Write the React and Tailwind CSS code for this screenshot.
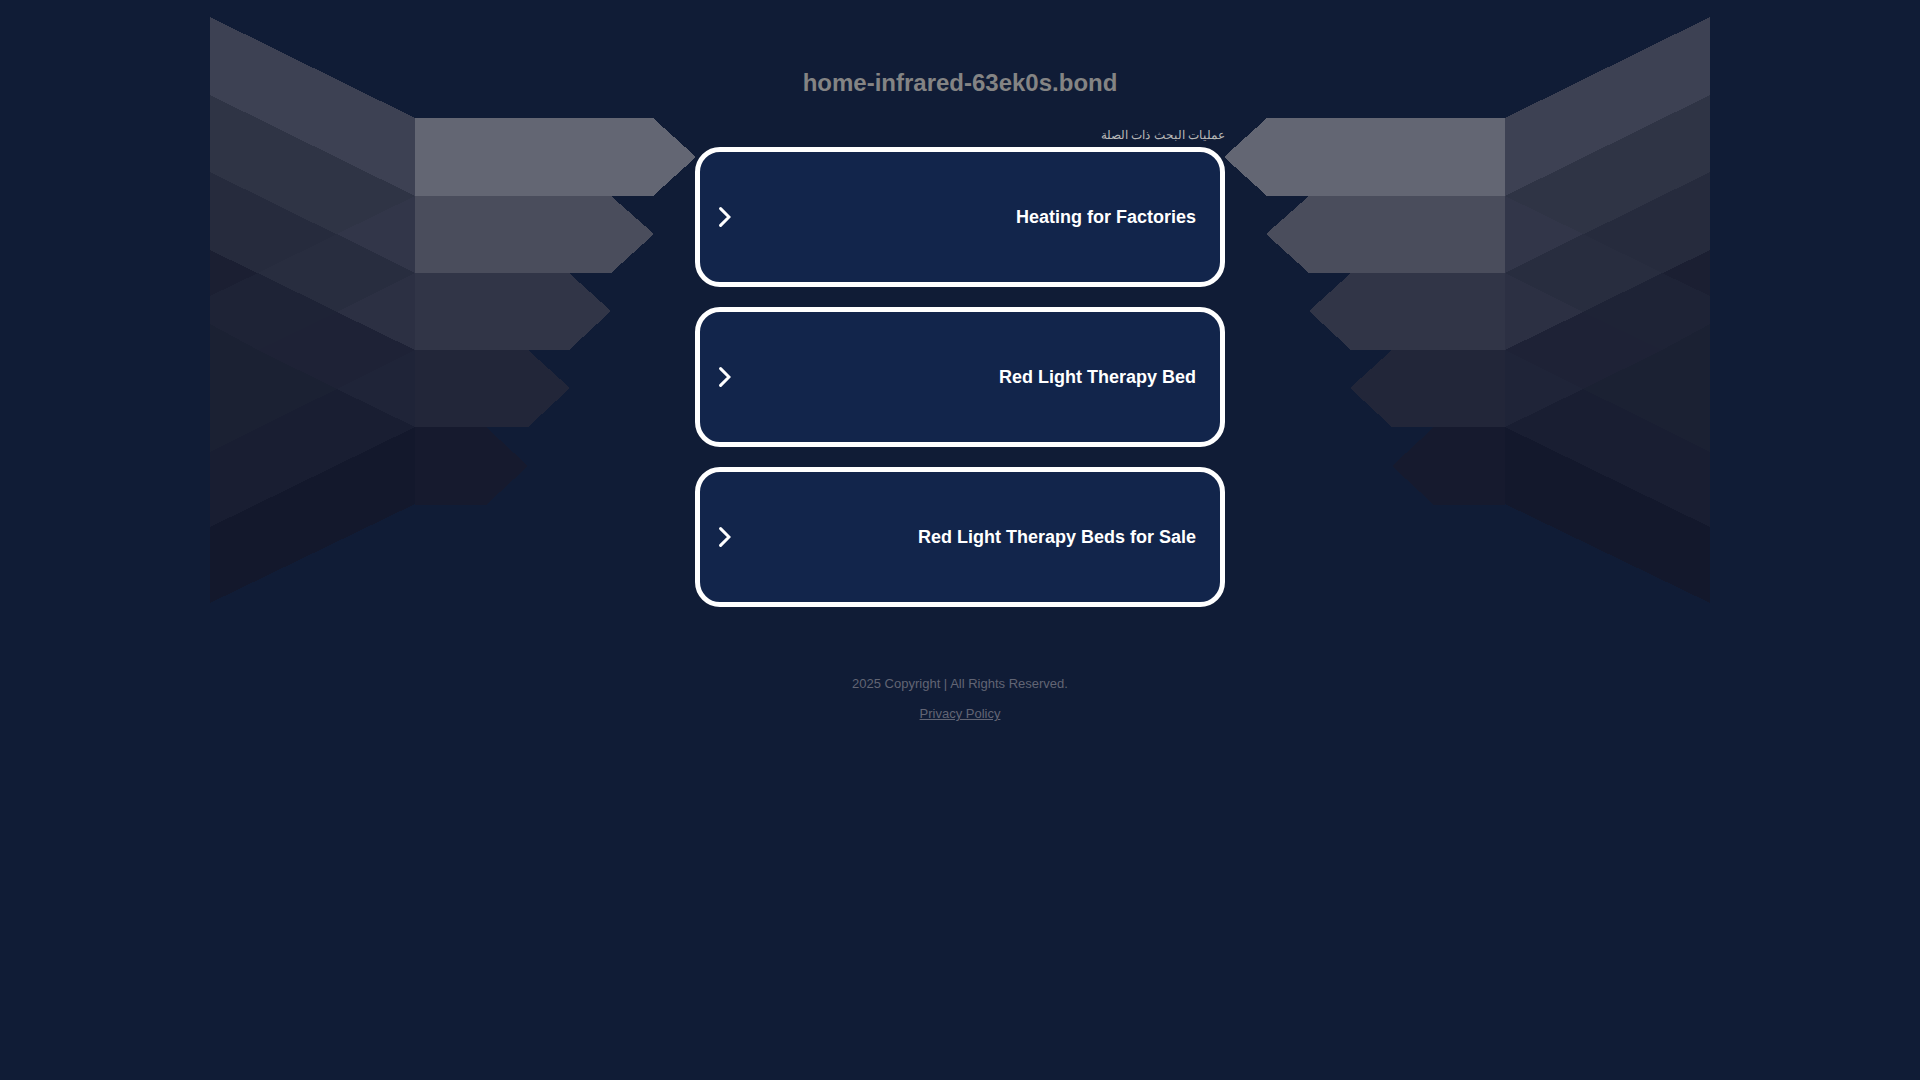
import clsx from 'clsx';

const RESULTS = ['Heating for Factories', 'Red Light Therapy Bed', 'Red Light Therapy Beds for Sale'];

// Painted in order: rising bands, falling bands, then the places where they cross
const BANDS = [
  { points: '0,233 205,179 205,333 0,435', fill: '#1b2133' },
  { points: '0,435 205,333 205,410 0,510', fill: '#191e32' },
  { points: '0,510 205,410 205,487 0,586', fill: '#13182c' },
  { points: '0,0 205,101 205,179 0,78', fill: '#3d4153' },
  { points: '0,78 205,179 205,256 0,155', fill: '#2f3445' },
  { points: '0,155 205,256 205,333 0,233', fill: '#262b3d' },
  { points: '0,233 205,333 205,410 0,307', fill: '#1b1f32' },
  { points: '205,179 205,256 127,217', fill: '#323649' },
  { points: '127,217 205,256 127,295 48,256', fill: '#282d3f' },
  { points: '205,256 205,333 127,295', fill: '#2c3043' },
  { points: '48,256 127,295 48,333 0,307 0,279', fill: '#1e2336' },
  { points: '127,295 205,333 127,372 48,333', fill: '#1e2236' },
  { points: '205,333 205,410 127,372', fill: '#1f2438' },
];

const ARROWS = [
  { points: '205,101 443,101 486,140 443,179 205,179', fill: '#636673' },
  { points: '205,179 401,179 444,217 401,256 205,256', fill: '#4a4d5c' },
  { points: '205,256 359,256 401,294 359,333 205,333', fill: '#313547' },
  { points: '205,333 318,333 360,371 318,410 205,410', fill: '#222639' },
  { points: '205,410 276,410 318,449 276,488 205,488', fill: '#161a2e' },
];

function Wing({ flipped }) {
  return (
    <div className="hidden min-w-0 flex-1 pt-[17px] lg:block">
      <svg
        viewBox="0 0 485 586"
        shapeRendering="crispEdges"
        aria-hidden="true"
        className={clsx('block w-full', flipped && '-scale-x-100')}
      >
        {[...BANDS, ...ARROWS].map((shape) => (
          <polygon key={shape.points} points={shape.points} fill={shape.fill} />
        ))}
      </svg>
    </div>
  );
}

function Chevron() {
  return (
    <svg viewBox="0 0 12 20" className="h-5 w-3 shrink-0" fill="none" stroke="currentColor" aria-hidden="true">
      <path d="M1.6 1.6 10 10 1.6 18.4" strokeWidth="3" strokeLinecap="round" strokeLinejoin="miter" />
    </svg>
  );
}

function ResultCard({ title }) {
  return (
    <a
      href="#"
      className="flex min-h-[140px] items-center justify-between rounded-[25px] border-5 border-white bg-[#12254b] pr-6 pl-[19px] text-lg font-bold text-white"
    >
      <Chevron />
      <span>{title}</span>
    </a>
  );
}

export default function App() {
  return (
    <div className="min-h-screen bg-[#101c36] font-['Liberation_Sans',Arial,sans-serif]">
      <div className="mx-auto flex max-w-[1500px] items-start justify-center">
        <Wing />

        <main className="w-full max-w-[530px] shrink-0">
          <h1 className="pt-16 text-center text-2xl leading-[38px] font-bold text-[#848484]">
            home-infrared-63ek0s.bond
          </h1>
          <p dir="rtl" lang="ar" className="mt-[25px] mb-1 text-xs leading-4 text-[#b7b7b7]">
            عمليات البحث ذات الصلة
          </p>
          <div className="flex flex-col gap-5">
            {RESULTS.map((title) => (
              <ResultCard key={title} title={title} />
            ))}
          </div>
        </main>

        <Wing flipped />
      </div>

      <footer className="mt-[67px] flex flex-col items-center gap-2.5 text-[13px] leading-5 text-[#626574]">
        <p>2025 Copyright | All Rights Reserved.</p>
        <a href="#" className="underline">
          Privacy Policy
        </a>
      </footer>
    </div>
  );
}
